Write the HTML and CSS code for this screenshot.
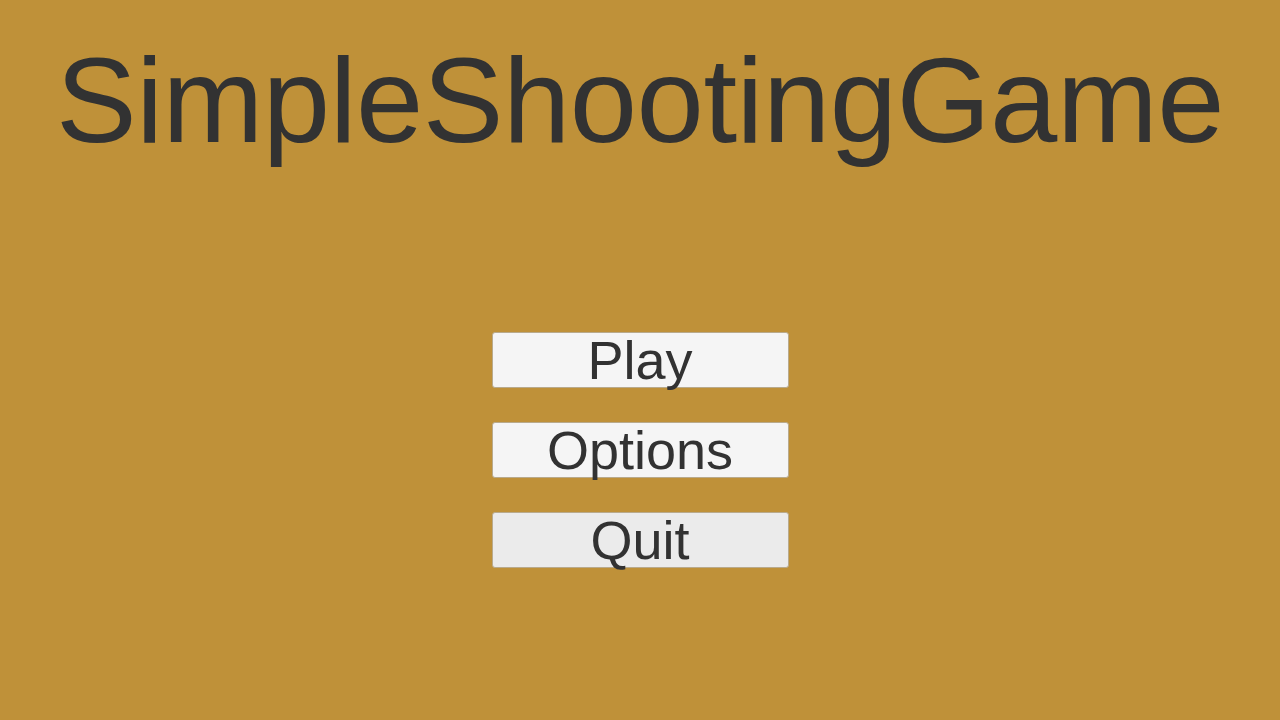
FILE: index.html
```html
<!DOCTYPE html>
<html>
<head>
<meta charset="utf-8">
<link rel="stylesheet" href="styles.css">
</head>
<body>
<div class="screen">
  <h1 class="title">SimpleShootingGame</h1>
  <div class="menu">
    <button class="btn">Play</button>
    <button class="btn">Options</button>
    <button class="btn btn-hover">Quit</button>
  </div>
</div>
</body>
</html>
```
FILE: styles.css
```css
html, body {
  margin: 0;
  padding: 0;
  width: 1280px;
  height: 720px;
  overflow: hidden;
  background: #bf9139;
}
.screen {
  width: 1280px;
  height: 720px;
  display: flex;
  flex-direction: column;
  align-items: center;
  font-family: "Liberation Sans", Arial, sans-serif;
  color: #323232;
}
.title {
  margin: 0;
  padding-top: 30px;
  font-weight: normal;
  font-size: 121px;
  letter-spacing: -0.5px;
  line-height: 140px;
  height: 140px;
  white-space: nowrap;
}
.menu {
  margin-top: 162px;
  display: flex;
  flex-direction: column;
  gap: 34px;
}
.btn {
  box-sizing: border-box;
  width: 297px;
  height: 56px;
  margin: 0;
  padding: 0;
  background: #f5f5f5;
  border: 1px solid #b9aa8c;
  border-radius: 3px;
  font-family: "Liberation Sans", Arial, sans-serif;
  font-size: 54px;
  line-height: 56px;
  color: #323232;
  display: flex;
  align-items: center;
  justify-content: center;
}
.btn-hover {
  background: #ebebeb;
}
```
